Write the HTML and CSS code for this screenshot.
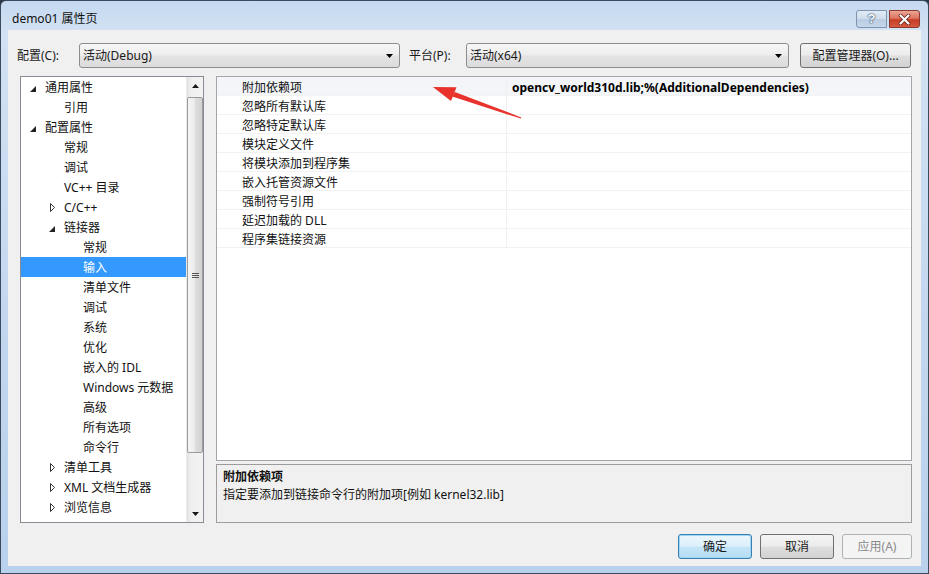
FILE: index.html
```html
<!DOCTYPE html>
<html lang="zh-CN">
<head>
<meta charset="utf-8">
<title>demo01 属性页</title>
<link rel="stylesheet" href="styles.css">
</head>
<body>
<div class="window">
  <div class="titlebar">
    <span class="title">demo01 属性页</span>
    <div class="caption-btns">
      <span class="cbtn cbtn-help">?</span>
      <span class="cbtn cbtn-close"><svg width="13" height="11" viewBox="0 0 13 11"><path d="M2.5 1.5 L10.5 9.5 M10.5 1.5 L2.5 9.5" stroke="#5a1a12" stroke-width="3.6" stroke-linecap="round"/><path d="M2.5 1.5 L10.5 9.5 M10.5 1.5 L2.5 9.5" stroke="#ffffff" stroke-width="2.2" stroke-linecap="round"/></svg></span>
    </div>
  </div>
  <div class="client">
    <div class="toolbar">
      <span class="lbl lbl-config">配置(C):</span>
      <div class="combo combo-config"><span class="combo-text">活动(Debug)</span><svg class="combo-arrow" width="7" height="4" viewBox="0 0 7 4"><path d="M0 0 H7 L3.5 4 Z" fill="#000"/></svg></div>
      <span class="lbl lbl-platform">平台(P):</span>
      <div class="combo combo-platform"><span class="combo-text">活动(x64)</span><svg class="combo-arrow" width="7" height="4" viewBox="0 0 7 4"><path d="M0 0 H7 L3.5 4 Z" fill="#000"/></svg></div>
      <button class="btn btn-cfgmgr">配置管理器(O)...</button>
    </div>
    <div class="main">
      <div class="tree">
        <ul class="tree-list">
          <li class="node l0"><span class="exp"><svg class="g-open" width="6" height="6" viewBox="0 0 6 6"><path d="M6 0 V6 H0 Z" fill="#222"/></svg></span>通用属性</li>
          <li class="node l1"><span class="exp"></span>引用</li>
          <li class="node l0"><span class="exp"><svg class="g-open" width="6" height="6" viewBox="0 0 6 6"><path d="M6 0 V6 H0 Z" fill="#222"/></svg></span>配置属性</li>
          <li class="node l1"><span class="exp"></span>常规</li>
          <li class="node l1"><span class="exp"></span>调试</li>
          <li class="node l1"><span class="exp"></span>VC++ 目录</li>
          <li class="node l1"><span class="exp"><svg class="g-closed" width="5" height="9" viewBox="0 0 5 9"><path d="M0.5 0.5 L4.5 4.5 L0.5 8.5 Z" fill="none" stroke="#333" stroke-width="1"/></svg></span>C/C++</li>
          <li class="node l1"><span class="exp"><svg class="g-open" width="6" height="6" viewBox="0 0 6 6"><path d="M6 0 V6 H0 Z" fill="#222"/></svg></span>链接器</li>
          <li class="node l2"><span class="exp"></span>常规</li>
          <li class="node l2 selected"><span class="exp"></span>输入</li>
          <li class="node l2"><span class="exp"></span>清单文件</li>
          <li class="node l2"><span class="exp"></span>调试</li>
          <li class="node l2"><span class="exp"></span>系统</li>
          <li class="node l2"><span class="exp"></span>优化</li>
          <li class="node l2"><span class="exp"></span>嵌入的 IDL</li>
          <li class="node l2"><span class="exp"></span>Windows 元数据</li>
          <li class="node l2"><span class="exp"></span>高级</li>
          <li class="node l2"><span class="exp"></span>所有选项</li>
          <li class="node l2"><span class="exp"></span>命令行</li>
          <li class="node l1"><span class="exp"><svg class="g-closed" width="5" height="9" viewBox="0 0 5 9"><path d="M0.5 0.5 L4.5 4.5 L0.5 8.5 Z" fill="none" stroke="#333" stroke-width="1"/></svg></span>清单工具</li>
          <li class="node l1"><span class="exp"><svg class="g-closed" width="5" height="9" viewBox="0 0 5 9"><path d="M0.5 0.5 L4.5 4.5 L0.5 8.5 Z" fill="none" stroke="#333" stroke-width="1"/></svg></span>XML 文档生成器</li>
          <li class="node l1"><span class="exp"><svg class="g-closed" width="5" height="9" viewBox="0 0 5 9"><path d="M0.5 0.5 L4.5 4.5 L0.5 8.5 Z" fill="none" stroke="#333" stroke-width="1"/></svg></span>浏览信息</li>
        </ul>
        <div class="vscroll">
          <div class="sb-btn"><svg width="7" height="4" viewBox="0 0 7 4"><path d="M3.5 0 L7 4 H0 Z" fill="#1a1a1a"/></svg></div>
          <div class="sb-track">
            <div class="sb-thumb"><span class="grip"></span></div>
          </div>
          <div class="sb-btn"><svg width="7" height="4" viewBox="0 0 7 4"><path d="M0 0 H7 L3.5 4 Z" fill="#1a1a1a"/></svg></div>
        </div>
      </div>
      <div class="right">
        <div class="grid">
          <div class="prow prow-sel"><span class="pname">附加依赖项</span><span class="pval">opencv_world310d.lib;%(AdditionalDependencies)</span></div>
          <div class="prow"><span class="pname">忽略所有默认库</span><span class="pval"></span></div>
          <div class="prow"><span class="pname">忽略特定默认库</span><span class="pval"></span></div>
          <div class="prow"><span class="pname">模块定义文件</span><span class="pval"></span></div>
          <div class="prow"><span class="pname">将模块添加到程序集</span><span class="pval"></span></div>
          <div class="prow"><span class="pname">嵌入托管资源文件</span><span class="pval"></span></div>
          <div class="prow"><span class="pname">强制符号引用</span><span class="pval"></span></div>
          <div class="prow"><span class="pname">延迟加载的 DLL</span><span class="pval"></span></div>
          <div class="prow"><span class="pname">程序集链接资源</span><span class="pval"></span></div>
        </div>
        <div class="desc">
          <div class="desc-title">附加依赖项</div>
          <div class="desc-text">指定要添加到链接命令行的附加项[例如 kernel32.lib]</div>
        </div>
      </div>
    </div>
    <div class="footer">
      <button class="btn btn-ok">确定</button>
      <button class="btn btn-cancel">取消</button>
      <button class="btn btn-apply" disabled>应用(A)</button>
    </div>
  </div>
  <svg class="annot" width="929" height="574" viewBox="0 0 929 574">
    <polygon points="433,87 456.5,87.2 451,101" fill="#e8322b"/>
    <polygon points="452.2,96.6 454.8,92 521.3,117.4 520.8,118.6" fill="#e8322b"/>
  </svg>
</div>
</body>
</html>
```

FILE: styles.css
```css
* { box-sizing: border-box; }

html, body {
  margin: 0;
  padding: 0;
  width: 929px;
  height: 574px;
  overflow: hidden;
  background: #2a3644;
}

body {
  font-family: "Noto Sans", "Noto Sans CJK SC", sans-serif;
  font-size: 12px;
  color: #000;
}

.window {
  position: relative;
  width: 929px;
  height: 574px;
  border: 1px solid #3b4a5c;
  border-radius: 6px 6px 0 0;
  background: linear-gradient(to bottom, #c4d8ef 0px, #d3e2f4 30px, #c3d8ef 300px, #b9d1ec 100%);
  padding: 0 7px 7px 7px;
  display: flex;
  flex-direction: column;
}

.titlebar {
  height: 29px;
  display: flex;
  align-items: flex-start;
  justify-content: space-between;
  padding: 0 0 0 4px;
  flex: none;
}

.title {
  margin-top: 10px;
  font-family: "Noto Sans", "Noto Sans CJK SC", sans-serif;
  font-size: 12px;
  line-height: 16px;
  color: #111;
}

.caption-btns {
  display: flex;
  gap: 2px;
  margin-top: 9px;
  margin-right: 1px;
}

.cbtn {
  width: 31px;
  height: 18px;
  display: flex;
  align-items: center;
  justify-content: center;
  border: 1px solid #7e94ad;
}

.cbtn-help {
  border-radius: 3px 0 0 3px;
  background: linear-gradient(to bottom, #e2ebf6 0%, #cfdcec 50%, #b9cce3 51%, #c7d7ea 100%);
  color: #fff;
  font-family: "Liberation Sans", sans-serif;
  font-weight: bold;
  font-size: 13px;
  line-height: 16px;
  text-shadow: 0 0 1px #3d5675, 0 0 1px #3d5675, 0 0 2px #3d5675;
}

.cbtn-close {
  border-color: #8a3a30;
  border-radius: 0 3px 3px 0;
  background: linear-gradient(to bottom, #eca595 0%, #de7560 45%, #c73e28 55%, #d4583f 100%);
}

.client {
  flex: 1;
  background: #f0f0f0;
  display: flex;
  flex-direction: column;
  padding: 13px 9px 0 12px;
}

/* toolbar */
.toolbar {
  height: 25px;
  display: flex;
  align-items: center;
  flex: none;
}

.lbl {
  font-size: 12px;
  line-height: 16px;
  color: #1a1a1a;
}

.lbl-config { width: 62px; margin-left: -3px; }
.lbl-platform { width: 57px; margin-left: 9px; }

.combo {
  height: 25px;
  border: 1px solid #8d8d8d;
  border-radius: 3px;
  background: linear-gradient(to bottom, #f7f7f7 0%, #ededed 48%, #e3e3e3 52%, #dcdcdc 100%);
  display: flex;
  align-items: center;
  justify-content: space-between;
  padding: 0 6px 0 3px;
}

.combo-config { width: 321px; }
.combo-platform { width: 323px; }

.combo-text {
  font-size: 12px;
  line-height: 16px;
  color: #1a1a1a;
}

.btn {
  font-family: "Noto Sans", "Noto Sans CJK SC", sans-serif;
  font-size: 12px;
  line-height: 16px;
  color: #1a1a1a;
  height: 25px;
  border: 1px solid #707070;
  border-radius: 3px;
  background: linear-gradient(to bottom, #f4f4f4 0%, #ececec 48%, #dedede 52%, #d2d2d2 100%);
  padding: 0;
  margin: 0;
  display: flex;
  align-items: center;
  justify-content: center;
}

.btn-cfgmgr {
  width: 111px;
  margin-left: 11px;
}

/* main */
.main {
  margin-top: 8px;
  height: 447px;
  display: flex;
  gap: 12px;
  flex: none;
}

.tree {
  width: 184px;
  border: 1px solid #898c95;
  background: #fff;
  display: flex;
}

.tree-list {
  list-style: none;
  margin: 0;
  padding: 0;
  flex: 1;
}

.node {
  height: 20px;
  display: flex;
  align-items: center;
  padding-top: 2px;
  font-size: 12px;
  line-height: 16px;
  color: #111;
  white-space: nowrap;
}

.node.l0 { padding-left: 5px; }
.node.l1 { padding-left: 24px; }
.node.l2 { padding-left: 43px; }

.node.selected {
  background: #3399ff;
  color: #fff;
}

.exp {
  width: 19px;
  height: 18px;
  flex: none;
  display: flex;
  align-items: center;
}

.g-open { margin-left: 4px; margin-top: 2px; }
.g-closed { margin-left: 5px; margin-top: -1px; }

.vscroll {
  width: 17px;
  display: flex;
  flex-direction: column;
  background: linear-gradient(to right, #e3e3e3 0%, #f0f0f0 30%, #f3f3f3 100%);
  border-left: 1px solid #ebebeb;
}

.sb-btn {
  height: 17px;
  display: flex;
  align-items: center;
  justify-content: center;
  flex: none;
}

.sb-track {
  flex: 1;
  padding-top: 3px;
}

.sb-thumb {
  height: 356px;
  border: 1px solid #9a9a9a;
  border-radius: 2px;
  background: linear-gradient(to right, #f5f5f5 0%, #ececec 45%, #dcdcdc 55%, #d3d3d3 100%);
  display: flex;
  align-items: center;
  justify-content: center;
}

.grip {
  width: 7px;
  height: 5px;
  border-top: 1px solid #555;
  border-bottom: 1px solid #555;
  background: linear-gradient(to bottom, transparent 0 1px, #555 1px 2px, transparent 2px);
}

.right {
  flex: 1;
  display: flex;
  flex-direction: column;
  gap: 3px;
}

.grid {
  flex: 1;
  border: 1px solid #a3a5aa;
  background: #fff;
}

.prow {
  height: 19px;
  display: flex;
  border-bottom: 1px solid #f2f2f2;
}

.prow-sel {
  background: #f3f5f8;
}

.pname {
  width: 290px;
  flex: none;
  padding-left: 25px;
  padding-top: 3px;
  border-right: 1px solid #f0f0f0;
  font-size: 12px;
  line-height: 15px;
  color: #111;
  white-space: nowrap;
}

.pval {
  flex: 1;
  padding-left: 5px;
  padding-top: 3px;
  font-size: 12px;
  line-height: 15px;
  font-weight: bold;
  color: #000;
  white-space: nowrap;
}

.desc {
  height: 59px;
  flex: none;
  border: 1px solid #9c9c9c;
  background: #f0f0f0;
  padding: 3px 0 0 6px;
}

.desc-title {
  font-weight: bold;
  font-size: 12px;
  line-height: 18px;
  color: #111;
}

.desc-text {
  font-size: 12px;
  line-height: 18px;
  color: #111;
}

/* footer */
.footer {
  margin-top: 11px;
  display: flex;
  justify-content: flex-end;
  gap: 8px;
}

.btn-ok {
  width: 74px;
  border-color: #3c7fb1;
  background: linear-gradient(to bottom, #ecf6fc 0%, #dcf0fb 48%, #c5e6f8 52%, #b4dcf4 100%);
  box-shadow: inset 0 0 0 1px #9ed6f5;
}

.btn-cancel { width: 74px; }

.btn-apply {
  width: 70px;
  color: #8a8a8a;
  border-color: #adb2b5;
  background: #f4f4f4;
}

.annot {
  position: absolute;
  left: -1px;
  top: -1px;
  pointer-events: none;
}
```
